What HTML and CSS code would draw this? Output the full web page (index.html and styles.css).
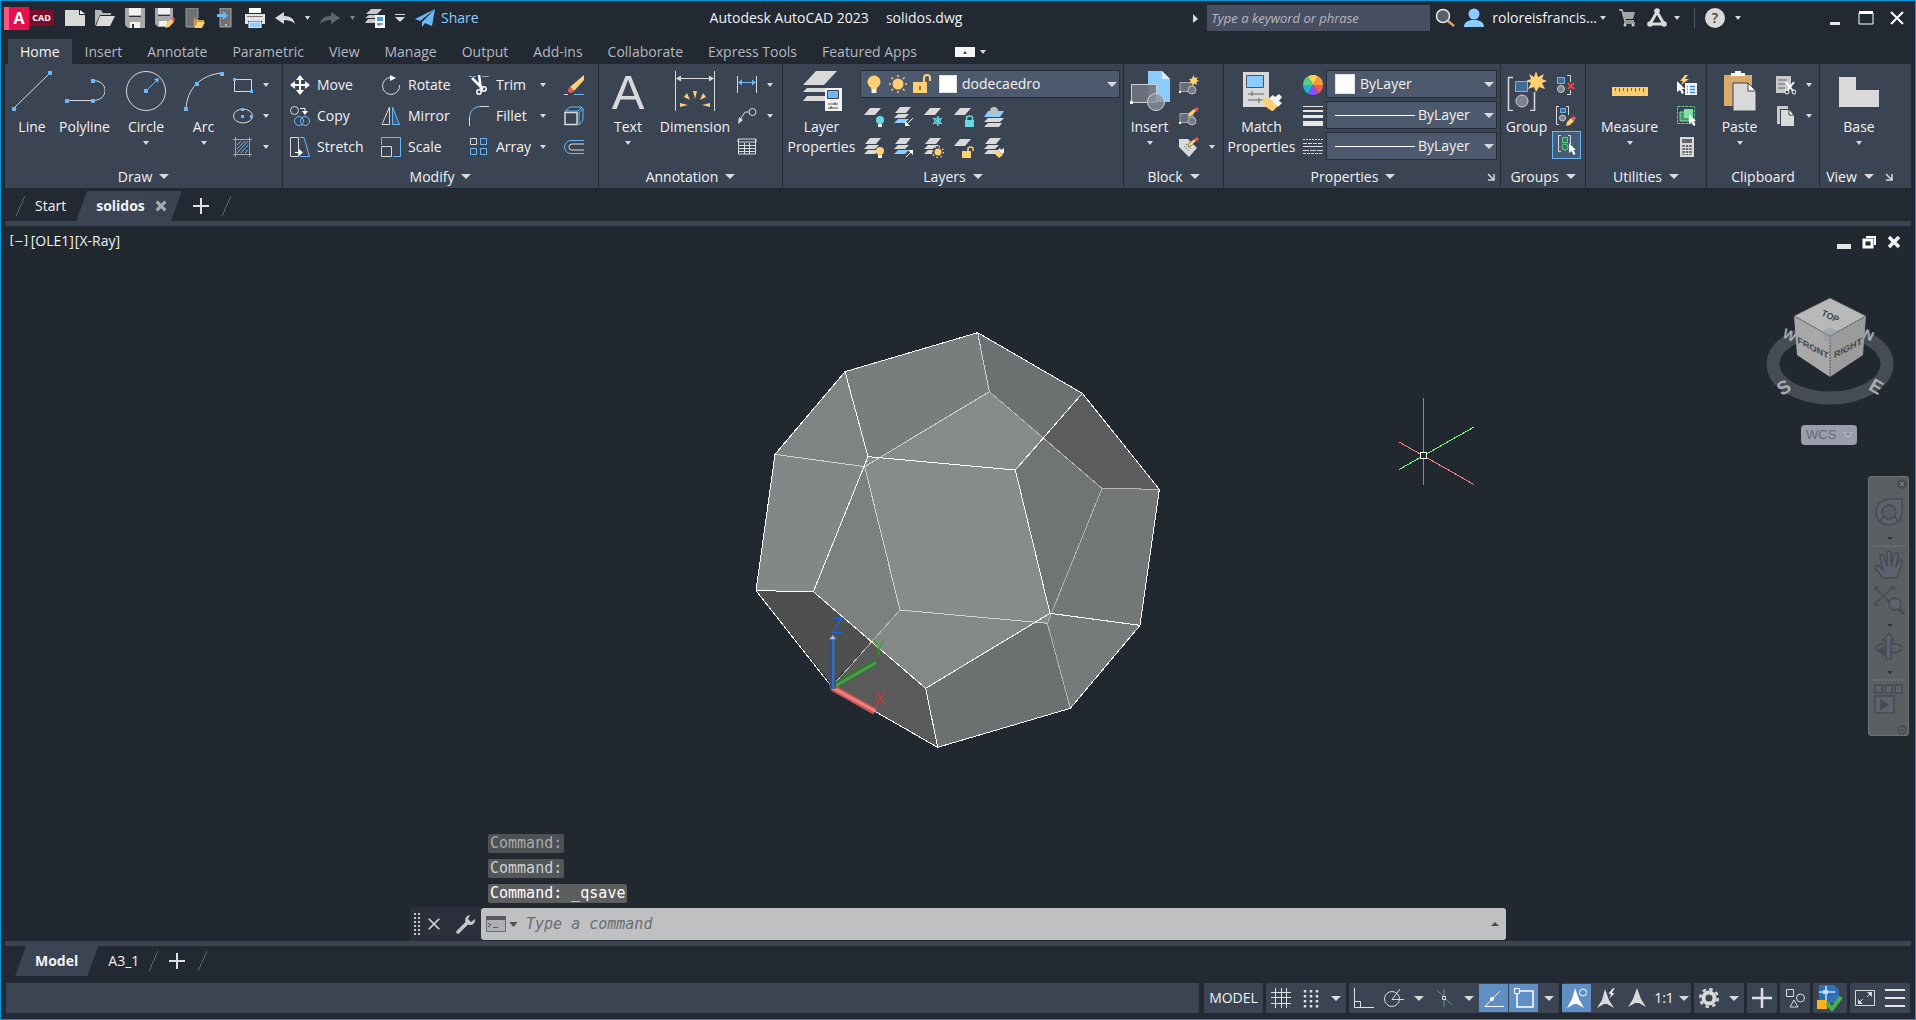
FILE: index.html
```
<!DOCTYPE html>
<html lang="en">
<head>
    <meta charset="UTF-8">
    <meta name="viewport" content="width=device-width, initial-scale=1.0">
    <title>Autodesk AutoCAD 2023 - solidos.dwg</title>
    <link rel="stylesheet" href="styles.css">
</head>
<body>
    <!-- icon sprite -->
    <svg class="sprite" aria-hidden="true">
        <symbol id="down" viewBox="0 0 8 5" preserveAspectRatio="none"><path d="M0 0h8L4 5z" fill="#d9d9d9"/></symbol>
        <symbol id="launch" viewBox="0 0 8 8"><path d="M1 1l5 5M7 1v6H1" fill="none" stroke="#d9d9d9" stroke-width="1.5"/></symbol>

        <!-- quick access -->
        <symbol id="new" viewBox="0 0 20 20"><path d="M0 2h14v5h6v11H0z" fill="#d9d9d9"/><path d="M15 2l5 4h-5z" fill="#fff"/></symbol>
        <symbol id="open" viewBox="0 0 20 20"><path d="M0 18V2h6l2 3h8v2H5z" fill="#b5b5b5"/><path d="M5 8h15l-5 10H1z" fill="#dcdcdc"/></symbol>
        <symbol id="save" viewBox="0 0 20 20"><path d="M0 0h20v20H3l-3-3z" fill="#a9a9a9"/><path d="M4 0h12v7H4zM5 14h10v6H5z" fill="#f2f2f2"/><path d="M4 8h12v1H4zM7 16h2v4H7z" fill="#333"/></symbol>
        <symbol id="saveas" viewBox="0 0 20 20"><path d="M0 0h18v12l-6 7H3l-3-3z" fill="#a9a9a9"/><path d="M3 0h12v6H3zM4 13h8v5H4z" fill="#f2f2f2"/><path d="M3 7h12v1H3z" fill="#333"/><path d="M10 20l1-4 5-5 3 3-5 5z" fill="#ffcf73"/><path d="M16 11l2-2 2 2-1 3z" fill="#ee5a5a"/></symbol>
        <symbol id="openweb" viewBox="0 0 20 20"><path d="M1 0h12v10H9v9H1z" fill="#717171" stroke="#999"/><path d="M9 19v-8h4l1 1h5v2h-7z" fill="#d79a45"/><path d="M12 14h8l-3 6H9z" fill="#ffcf73"/></symbol>
        <symbol id="saveweb" viewBox="0 0 20 20"><path d="M5 0h11v19H5z" fill="#717171" stroke="#aaa"/><path d="M2 6h6V3l5 4.500-5 4.500V9H2z" fill="#6cb8f6"/><circle cx="11" cy="17" r="1" fill="#ddd"/></symbol>
        <symbol id="print" viewBox="0 0 20 20"><path d="M4 0h12v5H4z" fill="#fff"/><path d="M0 6h20v10h-3v-3H3v3H0z" fill="#e3e3e3"/><path d="M2 8h16v1H2z" fill="#777"/><path d="M4 14h12v6H4z" fill="#8accff" stroke="#fff"/></symbol>
        <symbol id="undo" viewBox="0 0 20 20"><path d="M0 10l9-6v4c7 0 10 3 11 8-3-3-6-4-11-4v4z" fill="#d9d9d9"/></symbol>
        <symbol id="redo" viewBox="0 0 20 20"><path d="M20 10l-9-6v4C4 8 1 11 0 16c3-3 6-4 11-4v4z" fill="#5f6570"/></symbol>
        <symbol id="sheets" viewBox="0 0 20 20"><path d="M6 1h11l-5 5H1zM4 7h8v3H0zM3 11h8v4H0z" fill="#c9c9c9"/><path d="M10 7h10v13H10z" fill="#f2f2f2"/><path d="M12 9h6v4h-6z" fill="#3f9be6"/><path d="M12 16h6M14 15v3" stroke="#555"/></symbol>
        <symbol id="more" viewBox="0 0 10 10"><path d="M0 1.500h10" stroke="#d9d9d9"/><path d="M0 4h10L5 9z" fill="#d9d9d9"/></symbol>
        <symbol id="plane" viewBox="0 0 20 20"><path d="M20 1L0 11l5 2zM20 1L7 14v5l3-4 7 3z" fill="#6cb8f6"/></symbol>

        <!-- title bar, right -->
        <symbol id="search" viewBox="0 0 20 20"><path d="M13 13l6 5" stroke="#d9a066" stroke-width="2.500"/><circle cx="8" cy="8" r="6.500" fill="#5a6068" stroke="#e6e6e6" stroke-width="1.500"/></symbol>
        <symbol id="user" viewBox="0 0 20 20"><circle cx="10" cy="6" r="5.500" fill="#8accff"/><path d="M0 19c0-5 4-6 7-7h6c3 1 7 2 7 7z" fill="#8accff"/></symbol>
        <symbol id="cart" viewBox="0 0 20 20"><path d="M1 2h3l3 11h9M6 15h11" fill="none" stroke="#bdbdbd" stroke-width="1.500"/><path d="M5 4h12l-2 7H7z" fill="#a5a5a5"/><circle cx="7" cy="17" r="1.500" fill="#ccc"/><circle cx="15" cy="17" r="1.500" fill="#ccc"/></symbol>
        <symbol id="apps" viewBox="0 0 20 20"><path d="M10 4L3 16h14z" fill="none" stroke="#d9d9d9" stroke-width="3"/><circle cx="10" cy="3" r="2.800" fill="#d9d9d9"/><circle cx="3" cy="16" r="2.800" fill="#d9d9d9"/><circle cx="17" cy="16" r="2.800" fill="#d9d9d9"/></symbol>
        <symbol id="min" viewBox="0 0 16 16"><path d="M3 12h10v3H3z" fill="#e6e6e6"/></symbol>
        <symbol id="minbold" viewBox="0 0 16 16"><path d="M1 10h14v5H1z" fill="#e6e6e6"/></symbol>
        <symbol id="max" viewBox="0 0 16 16"><path d="M1 3h14v11H1z" fill="none" stroke="#fff"/><path d="M1 1h14v3H1z" fill="#fff"/></symbol>
        <symbol id="close" viewBox="0 0 16 16"><path d="M2 2l12 12M14 2L2 14" stroke="#fff" stroke-width="2"/></symbol>
        <symbol id="closebold" viewBox="0 0 16 16"><path d="M3 3l10 10M13 3L3 13" stroke="#f2f2f2" stroke-width="3.500"/></symbol>
        <symbol id="restore" viewBox="0 0 16 16"><path d="M5 3h9v8" fill="none" stroke="#fff" stroke-width="2"/><path d="M3 6h8v7H3z" fill="none" stroke="#fff" stroke-width="3"/></symbol>
        <symbol id="plus" viewBox="0 0 16 16"><path d="M8 0v16M0 8h16" stroke="#e0e0e0" stroke-width="2"/></symbol>

        <!-- draw -->
        <symbol id="line" viewBox="0 0 40 40"><path d="M1 38L38 2" stroke="#d9d9d9"/><path d="M0 36h4v4H0zM36 0h4v4h-4z" fill="#6cb8f6"/></symbol>
        <symbol id="polyline" viewBox="0 0 40 40"><path d="M2 29.500h26c7 0 12-4 12-10s-5-10-12-10" fill="none" stroke="#d9d9d9"/><path d="M0 28h4v4H0zM26 28h4v4h-4zM26 8h4v4h-4z" fill="#6cb8f6"/></symbol>
        <symbol id="circle" viewBox="0 0 40 40"><circle cx="20" cy="20" r="19.500" fill="none" stroke="#d9d9d9"/><path d="M20 20L30 10" stroke="#6cb8f6"/><path d="M18 18h4v4h-4zM33 7l-1 5-4-4z" fill="#6cb8f6"/></symbol>
        <symbol id="arc" viewBox="0 0 40 40"><path d="M2 38C3 18 16 4 38 2" fill="none" stroke="#d9d9d9"/><path d="M0 36h4v4H0zM11 11h4v4h-4zM36 1h4v4h-4z" fill="#6cb8f6"/></symbol>
        <symbol id="rect" viewBox="0 0 20 20"><path d="M1.500 4.500h17v12h-17z" fill="none" stroke="#d9d9d9"/><path d="M0 3h3v3H0zM17 15h3v3h-3z" fill="#6cb8f6"/></symbol>
        <symbol id="ellipse" viewBox="0 0 20 20"><ellipse cx="10" cy="10" rx="9.500" ry="7" fill="none" stroke="#d9d9d9"/><path d="M8 2h3v3H8zM8 9h3v3H8zM17 9h3v3h-3z" fill="#6cb8f6"/></symbol>
        <symbol id="hatch" viewBox="0 0 20 20"><path d="M0 2.500h19M0 17.500h19M2.500 0v20M16.500 0v20" stroke="#a5a5a5"/><path d="M4 8l4-4M4 12l8-8M4 16L15 4M8 16l7-8M12 16l3-3" stroke="#6cb8f6"/></symbol>

        <!-- modify -->
        <symbol id="move" viewBox="0 0 20 20"><path d="M10 3v14M3 10h14" stroke="#fff" stroke-width="2"/><path d="M10 0l4 5H6zM10 20l4-5H6zM0 10l5-4v8zM20 10l-5-4v8z" fill="#fff"/></symbol>
        <symbol id="copy" viewBox="0 0 20 20"><circle cx="4.500" cy="4.500" r="4" fill="none" stroke="#d9d9d9"/><path d="M10 2.500h5V6" fill="none" stroke="#fff"/><path d="M12 5h6l-3 4z" fill="#fff"/><circle cx="9" cy="15" r="4.500" fill="none" stroke="#6cb8f6"/><circle cx="15" cy="15" r="4.500" fill="none" stroke="#6cb8f6"/></symbol>
        <symbol id="stretch" viewBox="0 0 20 20"><path d="M.500.500h8v19h-8z" fill="none" stroke="#d9d9d9"/><path d="M10 .500h4l5.500 19H10" fill="none" stroke="#6cb8f6"/><path d="M5 15.500h6" stroke="#fff"/><path d="M9 12l4 3.500L9 19z" fill="#fff"/></symbol>
        <symbol id="rotate" viewBox="0 0 20 20"><path d="M9 2.500a8.500 8.500 0 1 0 9.500 7.500" fill="none" stroke="#d9d9d9"/><path d="M9 0l6 3-6 3z" fill="#fff"/></symbol>
        <symbol id="mirror" viewBox="0 0 20 20"><path d="M8.500 1v17.500H1z" fill="none" stroke="#d9d9d9"/><path d="M11.500 1v17.500h7z" fill="#3c5f80" stroke="#6cb8f6"/></symbol>
        <symbol id="scale" viewBox="0 0 20 20"><path d="M.500 8V.500h19v19H12" fill="none" stroke="#6cb8f6"/><path d="M.500 9.500h10v10H.500z" fill="none" stroke="#d9d9d9"/></symbol>
        <symbol id="trim" viewBox="0 0 20 20"><path d="M0 1.500h8" stroke="#6cb8f6" stroke-dasharray="3 1"/><path d="M13 1.500h7" stroke="#999"/><path d="M3 3l11 11M10 0l2 14" stroke="#fff" stroke-width="2.500"/><circle cx="15" cy="14" r="2.200" fill="none" stroke="#fff" stroke-width="1.500"/><circle cx="10" cy="17" r="2.200" fill="none" stroke="#fff" stroke-width="1.500"/></symbol>
        <symbol id="fillet" viewBox="0 0 20 20"><path d="M.500 11C1 5 5 1 11 .500" fill="none" stroke="#6cb8f6"/><path d="M.500 11v9M11 .500h9" stroke="#d9d9d9"/></symbol>
        <symbol id="array" viewBox="0 0 20 20"><path d="M1.500 1.500h6v6h-6z" fill="none" stroke="#d9d9d9"/><path d="M11.500 1.500h6v6h-6zM1.500 11.500h6v6h-6zM11.500 11.500h6v6h-6z" fill="none" stroke="#6cb8f6"/></symbol>
        <symbol id="erase" viewBox="0 0 20 20"><path d="M20 0v5L10 16l-4-4z" fill="#ffd27a"/><path d="M6 12l4 4c-2 3-6 2-6 0s1-3 2-4z" fill="#ee5a5a"/><path d="M0 19.500h4" stroke="#d9d9d9"/><path d="M10 19.500h10" stroke="#6cb8f6"/></symbol>
        <symbol id="explode" viewBox="0 0 20 20"><path d="M1 6.500h12v12H1z" fill="none" stroke="#d9d9d9" stroke-width="1.500"/><path d="M1 5l5-4h12l-4 4zM15 7l4-5v12l-4 5z" fill="none" stroke="#6cb8f6"/></symbol>
        <symbol id="offset" viewBox="0 0 20 20"><path d="M20 3.500H7a6.500 6.500 0 0 0 0 13h13" fill="none" stroke="#6cb8f6"/><path d="M20 7H8a3 3 0 0 0 0 6h12" fill="none" stroke="#d9d9d9"/></symbol>

        <!-- annotation -->
        <symbol id="dimension" viewBox="0 0 40 40"><path d="M.500 0v40M39.500 0v40M3 7.500h34" stroke="#d9d9d9"/><path d="M1 7.500l5-3v6zM39 7.500l-5-3v6z" fill="#d9d9d9"/><path d="M20 28l-2-8h4zM15 29l-6-3 3-4zM25 29l6-3-3-4zM13 34l-8-2v4zM27 34l8-2v4z" fill="#ffcf73"/></symbol>
        <symbol id="dimlinear" viewBox="0 0 20 20"><path d="M.500 1v17M19.500 1v17" stroke="#d9d9d9"/><path d="M2 7.500h16" stroke="#6cb8f6"/><path d="M1 7.500l4-3v6zM19 7.500l-4-3v6z" fill="#6cb8f6"/></symbol>
        <symbol id="leader" viewBox="0 0 20 20"><circle cx="15.500" cy="6" r="3.500" fill="none" stroke="#d9d9d9"/><path d="M12 6H8l-5 8" fill="none" stroke="#d9d9d9"/><path d="M1 18l1-7 4 3z" fill="#d9d9d9"/></symbol>
        <symbol id="table" viewBox="0 0 20 20"><path d="M1 2h18v3H1zM1.500 2v15h17V2M1 8.500h18M1 11.500h18M1 14.500h18M7.500 6v11M12.500 6v11" fill="none" stroke="#d9d9d9"/></symbol>

        <!-- layers -->
        <symbol id="layerprops" viewBox="0 0 40 40"><path d="M14 0h21L22 14H1zM5 17h18v4l-1 0H1zM5 25h18v5H1z" fill="#d9d9d9"/><path d="M23 17h17v23H23z" fill="#f2f2f2"/><path d="M25.500 19.500h11v8h-11z" fill="#6cb8f6" stroke="#444"/><path d="M26 33h10M26 37h10M33 31v3M29 35v3" stroke="#555"/></symbol>
        <symbol id="bulb" viewBox="0 0 20 20"><circle cx="10" cy="8" r="6.500" fill="#ffcf73"/><path d="M7 12h6v3H7z" fill="#ffcf73"/><path d="M7.500 15h5v4h-5z" fill="#f2f2f2"/></symbol>
        <symbol id="sun" viewBox="0 0 20 20"><circle cx="10" cy="10" r="5.500" fill="#ffcf73"/><path d="M10 1v2M1 10h2M3.500 3.500l1.500 1.500M16.500 3.500L15 5M10 19v-2M19 10h-2M16.500 16.500L15 15M3.500 16.500L5 15" stroke="#ffcf73" stroke-width="1.500"/></symbol>
        <symbol id="unlock" viewBox="0 0 20 20"><path d="M1 8h14v11H1z" fill="#ffcf73"/><path d="M12 8V4q0-3 3-3t3 3v3" fill="none" stroke="#ffcf73" stroke-width="2"/><path d="M8 12v4" stroke="#6b5630" stroke-width="1.500"/></symbol>
        <symbol id="sheet1" viewBox="0 0 20 20"><path d="M6 1h11L11 8H0z" fill="#d9d9d9"/></symbol>
        <symbol id="sheet3" viewBox="0 0 20 20"><path d="M6 0h11l-5 6H1zM4 7h11l-4 4H0zM4 12h11l-4 4H0z" fill="#d9d9d9"/></symbol>
        <symbol id="layoff" viewBox="0 0 20 20"><path d="M6 1h11L11 8H0z" fill="#d9d9d9"/><circle cx="16" cy="13" r="4" fill="#67d9e5"/><path d="M14 17h4v3h-4z" fill="#f2f2f2"/></symbol>
        <symbol id="layiso" viewBox="0 0 20 20"><path d="M6 0h11l-5 6H1zM4 7h11l-4 4H0z" fill="#d9d9d9"/><path d="M4 12h11l-4 4H0z" fill="#8accff"/><path d="M19 11l-6 6" stroke="#fff"/><path d="M11 19v-5l5 5z" fill="#fff"/></symbol>
        <symbol id="layfrz" viewBox="0 0 20 20"><path d="M6 1h11L11 8H0z" fill="#d9d9d9"/><path d="M14 9v10M9 11l9 6M9 17l9-6" stroke="#67d9e5" stroke-width="1.500"/><circle cx="13.500" cy="14" r="3" fill="none" stroke="#67d9e5"/></symbol>
        <symbol id="laylck" viewBox="0 0 20 20"><path d="M6 1h11L11 8H0z" fill="#d9d9d9"/><path d="M11 13h9v7h-9z" fill="#67d9e5"/><path d="M12.500 13v-2q0-2 3-2t3 2v2" fill="none" stroke="#67d9e5" stroke-width="1.500"/></symbol>
        <symbol id="laymcur" viewBox="0 0 20 20"><path d="M4 4h16l-4 6H0z" fill="#8accff"/><path d="M4 11h16l-4 4H0zM4 16h14l-3 4H0z" fill="#d9d9d9"/><circle cx="10" cy="4" r="4" fill="#bfbfbf"/></symbol>
        <symbol id="layon" viewBox="0 0 20 20"><path d="M6 0h11l-5 6H1zM4 7h11l-4 4H0zM4 12h11l-4 4H0z" fill="#d9d9d9"/><circle cx="16" cy="13" r="4" fill="#ffcf73"/><path d="M14 17h4v3h-4z" fill="#f2f2f2"/></symbol>
        <symbol id="layuniso" viewBox="0 0 20 20"><path d="M6 0h11l-5 6H1zM4 7h11l-4 4H0z" fill="#d9d9d9"/><path d="M4 12h11l-4 4H0z" fill="#8accff"/><path d="M12 19l6-6" stroke="#fff"/><path d="M14 12h5v5z" fill="#fff"/></symbol>
        <symbol id="laythw" viewBox="0 0 20 20"><path d="M6 0h11l-5 6H1zM4 7h11l-4 4H0zM4 12h11l-4 4H0z" fill="#d9d9d9"/><circle cx="14" cy="14" r="6" fill="#3b4453"/><circle cx="14" cy="14" r="3.500" fill="#ffcf73"/><circle cx="14" cy="14" r="5.500" fill="none" stroke="#ffcf73" stroke-width="1.500" stroke-dasharray="1.500 2.800"/></symbol>
        <symbol id="layulk" viewBox="0 0 20 20"><path d="M6 1h11L11 8H0z" fill="#d9d9d9"/><path d="M8 13h9v7H8z" fill="#ffcf73"/><path d="M14 13v-2q0-2 2.500-2t2.500 2v2" fill="none" stroke="#ffcf73" stroke-width="1.500"/></symbol>
        <symbol id="laymch" viewBox="0 0 20 20"><path d="M6 0h11l-5 6H1zM4 7h11l-4 4H0zM4 12h11l-4 4H0z" fill="#d9d9d9"/><path d="M10 15l4-3 5 5-4 3z" fill="#ffcf73"/><path d="M14 12l2-2 1 2 3-2v5l-2 1z" fill="#f2f2f2"/></symbol>

        <!-- block -->
        <symbol id="insert" viewBox="0 0 40 40"><path d="M18 0h14l8 8v23H18z" fill="#8accff"/><path d="M32 0l8 8h-8z" fill="#d6ecff"/><path d="M1.500 13.500h25v18h-25z" fill="#6f7580" fill-opacity=".9" stroke="#d0d0d0"/><circle cx="26" cy="31" r="8.500" fill="#8d929b" fill-opacity=".75" stroke="#d0d0d0"/><path d="M0 30h3v3H0z" fill="#fff"/></symbol>
        <symbol id="blocknew" viewBox="0 0 20 20"><path d="M1 7.500h13v9H1z" fill="#686e79" stroke="#aaa"/><circle cx="13" cy="15" r="4" fill="#777d88" stroke="#bbb"/><path d="M0 16h2v2H0z" fill="#fff"/><path d="M14.500 0l1.300 3 3-1-1.200 2.500L20 6l-2.700 1 1 3-2.800-1.500-1.500 2-1-2.500-3 .5 1.800-2.300L10 4l3-.5z" fill="#ffcf73"/></symbol>
        <symbol id="blockedit" viewBox="0 0 20 20"><path d="M1 7.500h13v9H1z" fill="#686e79" stroke="#aaa"/><circle cx="13" cy="15" r="4" fill="#777d88" stroke="#bbb"/><path d="M0 16h2v2H0z" fill="#fff"/><path d="M9 11l1-4 5-4 2 2-5 5z" fill="#ffcf73"/><path d="M15 3l3-2 2 2-3 3z" fill="#ee5a5a"/></symbol>
        <symbol id="attr" viewBox="0 0 20 20"><path d="M0 2h9l9 9-8 9-10-10z" fill="#d9d9d9"/><path d="M5 9l5 5M7 7l5 5" stroke="#777" stroke-dasharray="2 1"/><path d="M9 10l1-4 5-4 2 2-5 5z" fill="#ffcf73" stroke="#3b4453" stroke-width=".5"/><path d="M15 2l3-2 2 2-3 3z" fill="#ee5a5a"/></symbol>

        <!-- properties -->
        <symbol id="match" viewBox="0 0 40 40"><path d="M1 1h26v35H1z" fill="#d9d9d9"/><path d="M4.500 4.500h17v12h-17z" fill="#8accff" stroke="#555"/><path d="M6 23h16M6 29h16M10 20v5M17 27v5" stroke="#666"/><path d="M20 29l6-3 10 9-5 5c-5-1-9-6-11-11z" fill="#ffcf73"/><path d="M27 27l4-3 2 2 4-3 3 3-3 4 3 2-4 4z" fill="#f2f2f2"/></symbol>
        <symbol id="wheel" viewBox="0 0 20 20"><path d="M10 10L5 1.300a10 10 0 0 1 10 0z" fill="#ffd24d"/><path d="M10 10l5-8.700A10 10 0 0 1 20 10z" fill="#ff9a3c"/><path d="M10 10h10a10 10 0 0 1-5 8.700z" fill="#ee5a5a"/><path d="M10 10l5 8.700a10 10 0 0 1-10 0z" fill="#8a4dff"/><path d="M10 10l-5 8.700A10 10 0 0 1 0 10z" fill="#19b3d6"/><path d="M10 10H0a10 10 0 0 1 5-8.700z" fill="#54cf86"/></symbol>
        <symbol id="lweight" viewBox="0 0 20 20"><path d="M0 0h20v1H0zM0 4h20v2H0zM0 9h20v3H0zM0 15h20v5H0z" fill="#e6e6e6"/></symbol>
        <symbol id="ltype" viewBox="0 0 20 20"><path d="M0 2.500h20" stroke="#d9d9d9" stroke-dasharray="2 1"/><path d="M0 6.500h20" stroke="#d9d9d9" stroke-dasharray="4 1"/><path d="M0 9.500h20" stroke="#d9d9d9"/><path d="M0 13.500h20" stroke="#d9d9d9" stroke-dasharray="6 1"/><path d="M0 16.500h20" stroke="#d9d9d9" stroke-dasharray="3 1"/></symbol>

        <!-- groups -->
        <symbol id="group" viewBox="0 0 40 40"><path d="M6 6.500H1.500v33H6M23 39.500h4.500V21" fill="none" stroke="#d9d9d9" stroke-width="1.500"/><path d="M8.500 10.500h12v10h-12z" fill="#3f6c96" stroke="#6cb8f6"/><circle cx="15" cy="30" r="6" fill="#7d828c" stroke="#d0d0d0"/><path d="M29 0l2 6 6-3-2 5 5 2-5 2 3 6-6-2-3 5-2-5-6 2 3-6-5-2 5-2-2-5 5 3z" fill="#ffcf73"/></symbol>
        <symbol id="ungroup" viewBox="0 0 20 20"><path d="M1.500 2.500h7v6h-7z" fill="#3f6c96" stroke="#6cb8f6"/><circle cx="5" cy="14" r="3.500" fill="#7d828c" stroke="#d0d0d0"/><path d="M11 .500h3.500V7M11 19.500h3.500V15" fill="none" stroke="#d9d9d9"/><path d="M12 8l6 6M18 8l-6 6" stroke="#ee4444" stroke-width="2"/></symbol>
        <symbol id="groupedit" viewBox="0 0 20 20"><path d="M3 .500H.500v18H3M10 .500h2.500V9" fill="none" stroke="#d9d9d9"/><path d="M4.500 2.500h5v4h-5z" fill="#3f6c96" stroke="#6cb8f6"/><circle cx="6.500" cy="12" r="3" fill="#7d828c" stroke="#d0d0d0"/><path d="M10 20l1-4 4-4 3 3-4 4z" fill="#ffcf73"/><path d="M15 12l3-2 2 2-2 3z" fill="#ee5a5a"/></symbol>
        <symbol id="groupsel" viewBox="0 0 20 20"><path d="M4 .500H1.500v16H4M11 .500h2.500V9" fill="none" stroke="#d9d9d9"/><path d="M5.500 2.500h5v5h-5z" fill="#2f7a52" stroke="#5fd18c"/><circle cx="8" cy="12" r="3" fill="#2f7a52" stroke="#5fd18c"/><path d="M12 8v10l2.500-2 2 4 2-1-2-4H19z" fill="#fff"/></symbol>

        <!-- utilities -->
        <symbol id="ruler" viewBox="0 0 40 40"><path d="M2 16h36v9H2z" fill="#ffcf73"/><path d="M5.500 17v3M9.500 17v4M13.500 17v3M17.500 17v4M21.500 17v3M25.500 17v4M29.500 17v3M33.500 17v4" stroke="#7d6433"/></symbol>
        <symbol id="qselect" viewBox="0 0 20 20"><path d="M8 0L3 6h3l-2 4 8-6H8l3-4z" fill="#ffcf73"/><path d="M0 6v11l3-2 2 4 2-1-2-4h3z" fill="#fff"/><path d="M8 8h12v12H8z" fill="#f5f5f5"/><path d="M10 11.500h1M13 11.500h5M10 14.500h1M13 14.500h5M10 17.500h1M13 17.500h5" stroke="#2d8ce0" stroke-width="1.500"/></symbol>
        <symbol id="selall" viewBox="0 0 20 20"><path d="M.500.500h17v17H.500z" fill="none" stroke="#5fd18c" stroke-dasharray="3 1"/><path d="M3 6h9v9H3z" fill="#3f9c69" stroke="#82e0a8"/><path d="M7 3h9v9H7z" fill="#82e0a8"/><path d="M12 8v10l2.500-2 2 4 2-1-2-4H19z" fill="#fff"/></symbol>
        <symbol id="calc" viewBox="0 0 20 20"><path d="M3 0h14v20H3z" fill="#d9d9d9"/><path d="M5 2h10v4H5z" fill="#666"/><path d="M6.500 8v10M10 8v10M13.500 8v10" stroke="#666" stroke-width="2.500" stroke-dasharray="2 1"/></symbol>

        <!-- clipboard -->
        <symbol id="paste" viewBox="0 0 40 40"><path d="M4 4h28v31H4z" fill="#d8ab6c"/><path d="M11 5V2h4V0h6v2h4v3z" fill="#fff"/><path d="M13 12h15l8 8v20H13z" fill="#d9d9d9" stroke="#3b4453"/><path d="M28 12l8 8h-8z" fill="#fff" stroke="#3b4453"/></symbol>
        <symbol id="cut" viewBox="0 0 20 20"><path d="M0 1h15v9l-5 8H0z" fill="#c9c9c9"/><path d="M2 5h9M2 9h7M2 13h7" stroke="#666"/><path d="M10 7l7 9M18 7l-7 9" stroke="#fff" stroke-width="2"/><circle cx="11" cy="17" r="2" fill="#3b4453" stroke="#fff"/><circle cx="18" cy="17" r="2" fill="#3b4453" stroke="#fff"/></symbol>
        <symbol id="copyclip" viewBox="0 0 20 20"><path d="M1 0h11v3H4v15H1z" fill="#c9c9c9"/><path d="M5 4h8l5 5v11H5z" fill="#d9d9d9"/><path d="M13 3l5 6h-5z" fill="#fff" stroke="#3b4453"/></symbol>
        <symbol id="base" viewBox="0 0 40 40"><path d="M0 6h17v13h23v17H0z" fill="#d9d9d9"/></symbol>

        <!-- status bar -->
        <symbol id="s-grid" viewBox="0 0 20 20"><path d="M0 4.500h20M0 9.500h20M0 15.500h20M4.500 0v20M10.500 0v20M15.500 0v20" stroke="#e0e0e0"/></symbol>
        <symbol id="s-snap" viewBox="0 0 20 20"><path d="M4 2v18M10 2v18M16 2v18" stroke="#e0e0e0" stroke-width="2.500" stroke-dasharray="2.500 2.500"/></symbol>
        <symbol id="s-ortho" viewBox="0 0 20 20"><path d="M.500 0v19.500H20M.500 13.500h6v6" fill="none" stroke="#e0e0e0"/></symbol>
        <symbol id="s-polar" viewBox="0 0 20 20"><circle cx="8" cy="11" r="7.500" fill="none" stroke="#d9d9d9"/><path d="M20 11.500H8L16 1" fill="none" stroke="#d9d9d9"/></symbol>
        <symbol id="s-iso" viewBox="0 0 20 20"><path d="M10 1v18" stroke="#4fae6e"/><path d="M3 2l15 15" stroke="#d9606a"/><path d="M8.500 8.500h3v3h-3z" fill="#3b4453" stroke="#ddd"/></symbol>
        <symbol id="s-track" viewBox="0 0 20 20"><path d="M16 3L1 18.500h19" fill="none" stroke="#fff"/><circle cx="8" cy="11" r="2" fill="#fff"/></symbol>
        <symbol id="s-osnap" viewBox="0 0 20 20"><path d="M3 3h16v16H3z" fill="none" stroke="#fff" stroke-width="1.500"/><path d="M.500.500h5v5h-5z" fill="#5f8fc4" stroke="#fff"/></symbol>
        <symbol id="s-anno" viewBox="0 0 20 20"><path d="M10 0l4 11 5 8-7-4H8l-7 4 5-8z" fill="#d9d9d9"/></symbol>
        <symbol id="s-annovis" viewBox="0 0 20 20"><path d="M8 0l4 11 5 9-7-4H7l-7 4 5-9z" fill="#fff"/><circle cx="16" cy="4.500" r="3.500" fill="none" stroke="#fff"/></symbol>
        <symbol id="s-annoauto" viewBox="0 0 20 20"><path d="M8 1l4 11 5 8-7-4H7l-7 4 5-8z" fill="#d9d9d9"/><path d="M16 0l-5 6h3l-2 5 6-6h-3l3-5z" fill="#fff" stroke="#3b4453" stroke-width=".500"/></symbol>
        <symbol id="s-gear" viewBox="0 0 20 20"><circle cx="10" cy="10" r="5.500" fill="none" stroke="#d9d9d9" stroke-width="4"/><circle cx="10" cy="10" r="8.800" fill="none" stroke="#d9d9d9" stroke-width="2.500" stroke-dasharray="3.500 3.410"/></symbol>
        <symbol id="s-isolate" viewBox="0 0 20 20"><path d="M1.500 1.500h7v7h-7zM9 12l4 7H5z" fill="none" stroke="#d9d9d9"/><circle cx="15.500" cy="10" r="4" fill="none" stroke="#d9d9d9"/></symbol>
        <symbol id="s-tray" viewBox="0 0 26 26"><path d="M2 0h15l5 5v13H2z" fill="#2f6fb5"/><path d="M9 1v14M2 7h16" stroke="#bfe0ff" stroke-width="1.500"/><path d="M6 5h5v4H6z" fill="#bfe0ff"/><path d="M0 15h10v9H0z" fill="#f6b21b"/><path d="M10 18l5 6 9-12" fill="none" stroke="#46b04a" stroke-width="4"/></symbol>
        <symbol id="s-clean" viewBox="0 0 20 20"><path d="M.500 2.500h19v15H.500z" fill="none" stroke="#d9d9d9"/><path d="M12 9l4-4M8 11l-4 4" stroke="#d9d9d9"/><path d="M12 4h5v5zM3 11v5h5z" fill="#d9d9d9"/></symbol>
        <symbol id="s-menu" viewBox="0 0 20 20"><path d="M0 2h20M0 10h20M0 18h20" stroke="#e6e6e6" stroke-width="2"/></symbol>
    </svg>

    <div class="window">
        <header class="titlebar">
            <div class="quick">
                <button class="logo" aria-label="Application menu"><span class="logo-a">A</span><span class="logo-cad">CAD</span></button>
                <button aria-label="New"><svg class="icon"><use href="#new"/></svg></button>
                <button aria-label="Open"><svg class="icon"><use href="#open"/></svg></button>
                <button aria-label="Save"><svg class="icon"><use href="#save"/></svg></button>
                <button aria-label="Save as"><svg class="icon"><use href="#saveas"/></svg></button>
                <button aria-label="Open from web"><svg class="icon"><use href="#openweb"/></svg></button>
                <button aria-label="Save to web"><svg class="icon"><use href="#saveweb"/></svg></button>
                <button aria-label="Plot"><svg class="icon"><use href="#print"/></svg></button>
                <button aria-label="Undo"><svg class="icon"><use href="#undo"/></svg></button>
                <button aria-label="Undo list"><svg class="arrow"><use href="#down"/></svg></button>
                <button aria-label="Redo"><svg class="icon"><use href="#redo"/></svg></button>
                <button aria-label="Redo list" class="dim"><svg class="arrow"><use href="#down"/></svg></button>
                <button aria-label="Batch plot"><svg class="icon"><use href="#sheets"/></svg></button>
                <button aria-label="Customize"><svg class="icon-more"><use href="#more"/></svg></button>
                <button class="share"><svg class="icon"><use href="#plane"/></svg>Share</button>
            </div>
            <div class="caption"><span>Autodesk AutoCAD 2023</span><span>solidos.dwg</span></div>
            <div class="infocenter">
                <button class="expand" aria-label="Collapse search"><svg viewBox="0 0 5 9"><path d="M0 0v9l5-4z" fill="#d9d9d9"/></svg></button>
                <input class="search" type="text" placeholder="Type a keyword or phrase" aria-label="Search">
                <button aria-label="Search"><svg class="icon"><use href="#search"/></svg></button>
                <button class="account"><svg class="icon"><use href="#user"/></svg>roloreisfrancis...<svg class="arrow"><use href="#down"/></svg></button>
                <button aria-label="App store" class="store"><svg class="icon"><use href="#cart"/></svg></button>
                <button aria-label="Autodesk" class="apps"><svg class="icon"><use href="#apps"/></svg><svg class="arrow"><use href="#down"/></svg></button>
                <button aria-label="Help" class="help"><span class="help-mark">?</span><svg class="arrow"><use href="#down"/></svg></button>
            </div>
            <div class="winctl">
                <button aria-label="Minimize"><svg class="icon16"><use href="#min"/></svg></button>
                <button aria-label="Maximize"><svg class="icon16"><use href="#max"/></svg></button>
                <button aria-label="Close"><svg class="icon16"><use href="#close"/></svg></button>
            </div>
        </header>

        <nav class="tabs">
            <button class="tab active">Home</button>
            <button class="tab">Insert</button>
            <button class="tab">Annotate</button>
            <button class="tab">Parametric</button>
            <button class="tab">View</button>
            <button class="tab">Manage</button>
            <button class="tab">Output</button>
            <button class="tab">Add-ins</button>
            <button class="tab">Collaborate</button>
            <button class="tab">Express Tools</button>
            <button class="tab">Featured Apps</button>
            <button class="collapse" aria-label="Minimize ribbon"><span class="collapse-box">&#9650;</span><svg class="arrow"><use href="#down"/></svg></button>
        </nav>

        <div class="ribbon">
            <section class="panel draw">
                <div class="panel-body">
                    <button class="big"><svg class="icon40"><use href="#line"/></svg><span>Line</span></button>
                    <button class="big"><svg class="icon40"><use href="#polyline"/></svg><span>Polyline</span></button>
                    <button class="big"><svg class="icon40"><use href="#circle"/></svg><span>Circle</span><svg class="arrow"><use href="#down"/></svg></button>
                    <button class="big"><svg class="icon40"><use href="#arc"/></svg><span>Arc</span><svg class="arrow"><use href="#down"/></svg></button>
                    <div class="stack">
                        <button class="tool" aria-label="Rectangle"><svg class="icon"><use href="#rect"/></svg><svg class="arrow"><use href="#down"/></svg></button>
                        <button class="tool" aria-label="Ellipse"><svg class="icon"><use href="#ellipse"/></svg><svg class="arrow"><use href="#down"/></svg></button>
                        <button class="tool" aria-label="Hatch"><svg class="icon"><use href="#hatch"/></svg><svg class="arrow"><use href="#down"/></svg></button>
                    </div>
                </div>
                <div class="panel-title"><button class="panel-name">Draw<svg class="arrow-lg"><use href="#down"/></svg></button></div>
            </section>

            <section class="panel modify">
                <div class="panel-body">
                    <button class="tool"><svg class="icon"><use href="#move"/></svg>Move</button>
                    <button class="tool"><svg class="icon"><use href="#rotate"/></svg>Rotate</button>
                    <button class="tool split"><svg class="icon"><use href="#trim"/></svg>Trim<svg class="arrow"><use href="#down"/></svg></button>
                    <button class="tool" aria-label="Erase"><svg class="icon"><use href="#erase"/></svg></button>
                    <button class="tool"><svg class="icon"><use href="#copy"/></svg>Copy</button>
                    <button class="tool"><svg class="icon"><use href="#mirror"/></svg>Mirror</button>
                    <button class="tool split"><svg class="icon"><use href="#fillet"/></svg>Fillet<svg class="arrow"><use href="#down"/></svg></button>
                    <button class="tool" aria-label="Explode"><svg class="icon"><use href="#explode"/></svg></button>
                    <button class="tool"><svg class="icon"><use href="#stretch"/></svg>Stretch</button>
                    <button class="tool"><svg class="icon"><use href="#scale"/></svg>Scale</button>
                    <button class="tool split"><svg class="icon"><use href="#array"/></svg>Array<svg class="arrow"><use href="#down"/></svg></button>
                    <button class="tool" aria-label="Offset"><svg class="icon"><use href="#offset"/></svg></button>
                </div>
                <div class="panel-title"><button class="panel-name">Modify<svg class="arrow-lg"><use href="#down"/></svg></button></div>
            </section>

            <section class="panel annotation">
                <div class="panel-body">
                    <button class="big"><span class="glyph-a">A</span><span>Text</span><svg class="arrow"><use href="#down"/></svg></button>
                    <button class="big"><svg class="icon40"><use href="#dimension"/></svg><span>Dimension</span></button>
                    <div class="stack">
                        <button class="tool" aria-label="Linear"><svg class="icon"><use href="#dimlinear"/></svg><svg class="arrow"><use href="#down"/></svg></button>
                        <button class="tool" aria-label="Leader"><svg class="icon"><use href="#leader"/></svg><svg class="arrow"><use href="#down"/></svg></button>
                        <button class="tool" aria-label="Table"><svg class="icon"><use href="#table"/></svg></button>
                    </div>
                </div>
                <div class="panel-title"><button class="panel-name">Annotation<svg class="arrow-lg"><use href="#down"/></svg></button></div>
            </section>

            <section class="panel layers">
                <div class="panel-body">
                    <button class="big"><svg class="icon40"><use href="#layerprops"/></svg><span>Layer<br>Properties</span></button>
                    <div class="layer-tools">
                        <div class="combo">
                            <svg class="icon"><use href="#bulb"/></svg>
                            <svg class="icon"><use href="#sun"/></svg>
                            <svg class="icon"><use href="#unlock"/></svg>
                            <span class="swatch"></span>
                            <select aria-label="Layer"><option>dodecaedro</option></select>
                            <svg class="arrow-lg"><use href="#down"/></svg>
                        </div>
                        <div class="icon-row">
                            <button class="tool" aria-label="Off"><svg class="icon"><use href="#layoff"/></svg></button>
                            <button class="tool" aria-label="Isolate"><svg class="icon"><use href="#layiso"/></svg></button>
                            <button class="tool" aria-label="Freeze"><svg class="icon"><use href="#layfrz"/></svg></button>
                            <button class="tool" aria-label="Lock"><svg class="icon"><use href="#laylck"/></svg></button>
                            <button class="tool" aria-label="Make current"><svg class="icon"><use href="#laymcur"/></svg></button>
                        </div>
                        <div class="icon-row">
                            <button class="tool" aria-label="Turn all on"><svg class="icon"><use href="#layon"/></svg></button>
                            <button class="tool" aria-label="Unisolate"><svg class="icon"><use href="#layuniso"/></svg></button>
                            <button class="tool" aria-label="Thaw all"><svg class="icon"><use href="#laythw"/></svg></button>
                            <button class="tool" aria-label="Unlock"><svg class="icon"><use href="#layulk"/></svg></button>
                            <button class="tool" aria-label="Match layer"><svg class="icon"><use href="#laymch"/></svg></button>
                        </div>
                    </div>
                </div>
                <div class="panel-title"><button class="panel-name">Layers<svg class="arrow-lg"><use href="#down"/></svg></button></div>
            </section>

            <section class="panel block">
                <div class="panel-body">
                    <button class="big"><svg class="icon40"><use href="#insert"/></svg><span>Insert</span><svg class="arrow"><use href="#down"/></svg></button>
                    <div class="stack">
                        <button class="tool" aria-label="Create"><svg class="icon"><use href="#blocknew"/></svg></button>
                        <button class="tool" aria-label="Edit"><svg class="icon"><use href="#blockedit"/></svg></button>
                        <button class="tool" aria-label="Edit attributes"><svg class="icon"><use href="#attr"/></svg><svg class="arrow"><use href="#down"/></svg></button>
                    </div>
                </div>
                <div class="panel-title"><button class="panel-name">Block<svg class="arrow-lg"><use href="#down"/></svg></button></div>
            </section>

            <section class="panel properties">
                <div class="panel-body">
                    <button class="big"><svg class="icon40"><use href="#match"/></svg><span>Match<br>Properties</span></button>
                    <div class="stack">
                        <button class="tool" aria-label="Object color"><svg class="icon"><use href="#wheel"/></svg></button>
                        <button class="tool" aria-label="Lineweight"><svg class="icon"><use href="#lweight"/></svg></button>
                        <button class="tool" aria-label="Linetype"><svg class="icon"><use href="#ltype"/></svg></button>
                    </div>
                    <div class="combos">
                        <div class="combo"><span class="swatch swatch-lg"></span><select aria-label="Color"><option>ByLayer</option></select><svg class="arrow-lg"><use href="#down"/></svg></div>
                        <div class="combo"><span class="sample"></span><select aria-label="Lineweight"><option>ByLayer</option></select><svg class="arrow-lg"><use href="#down"/></svg></div>
                        <div class="combo"><span class="sample"></span><select aria-label="Linetype"><option>ByLayer</option></select><svg class="arrow-lg"><use href="#down"/></svg></div>
                    </div>
                </div>
                <div class="panel-title"><button class="panel-name">Properties<svg class="arrow-lg"><use href="#down"/></svg></button><button class="launcher" aria-label="Properties palette"><svg><use href="#launch"/></svg></button></div>
            </section>

            <section class="panel groups">
                <div class="panel-body">
                    <button class="big"><svg class="icon40"><use href="#group"/></svg><span>Group</span></button>
                    <div class="stack">
                        <button class="tool" aria-label="Ungroup"><svg class="icon"><use href="#ungroup"/></svg></button>
                        <button class="tool" aria-label="Group edit"><svg class="icon"><use href="#groupedit"/></svg></button>
                        <button class="tool pressed" aria-label="Group selection"><svg class="icon"><use href="#groupsel"/></svg></button>
                    </div>
                </div>
                <div class="panel-title"><button class="panel-name">Groups<svg class="arrow-lg"><use href="#down"/></svg></button></div>
            </section>

            <section class="panel utilities">
                <div class="panel-body">
                    <button class="big"><svg class="icon40"><use href="#ruler"/></svg><span>Measure</span><svg class="arrow"><use href="#down"/></svg></button>
                    <div class="stack">
                        <button class="tool" aria-label="Quick select"><svg class="icon"><use href="#qselect"/></svg></button>
                        <button class="tool" aria-label="Select all"><svg class="icon"><use href="#selall"/></svg></button>
                        <button class="tool" aria-label="Calculator"><svg class="icon"><use href="#calc"/></svg></button>
                    </div>
                </div>
                <div class="panel-title"><button class="panel-name">Utilities<svg class="arrow-lg"><use href="#down"/></svg></button></div>
            </section>

            <section class="panel clipboard">
                <div class="panel-body">
                    <button class="big"><svg class="icon40"><use href="#paste"/></svg><span>Paste</span><svg class="arrow"><use href="#down"/></svg></button>
                    <div class="stack">
                        <button class="tool" aria-label="Cut"><svg class="icon"><use href="#cut"/></svg><svg class="arrow"><use href="#down"/></svg></button>
                        <button class="tool" aria-label="Copy clip"><svg class="icon"><use href="#copyclip"/></svg><svg class="arrow"><use href="#down"/></svg></button>
                    </div>
                </div>
                <div class="panel-title"><button class="panel-name">Clipboard</button></div>
            </section>

            <section class="panel view">
                <div class="panel-body">
                    <button class="big"><svg class="icon40"><use href="#base"/></svg><span>Base</span><svg class="arrow"><use href="#down"/></svg></button>
                </div>
                <div class="panel-title"><button class="panel-name">View<svg class="arrow-lg"><use href="#down"/></svg></button><button class="launcher" aria-label="View settings"><svg><use href="#launch"/></svg></button></div>
            </section>
        </div>

        <nav class="doc-tabs file-tabs">
            <span class="slash"></span>
            <button class="doc-tab">Start</button>
            <button class="doc-tab current">solidos<svg class="tab-x"><use href="#closebold"/></svg></button>
            <button class="add" aria-label="New drawing"><svg class="icon16"><use href="#plus"/></svg></button>
            <span class="slash"></span>
        </nav>

        <main class="canvas">
            <div class="vp-label"><button>[&#8211;]</button><button>[OLE1]</button><button>[X-Ray]</button></div>
            <div class="vp-controls">
                <button aria-label="Minimize drawing"><svg class="icon16"><use href="#minbold"/></svg></button>
                <button aria-label="Restore drawing"><svg class="icon16"><use href="#restore"/></svg></button>
                <button aria-label="Close drawing"><svg class="icon16"><use href="#closebold"/></svg></button>
            </div>

            <!-- dodecahedron, x-ray style -->
            <svg class="solid" viewBox="0 0 1320 1350">
                <g shape-rendering="crispEdges">
                    <path fill="#797d7d" d="M315 185L713 68L748 245L425 443L384 440z"/>
                    <path fill="#6c7070" d="M713 68L1027 250L910 381L748 245z"/>
                    <path fill="#868a8a" d="M748 245L910 381L826 480L384 440L374 470z"/>
                    <path fill="#7f8383" d="M315 185L384 440L374 470L105 433z"/>
                    <path fill="#838787" d="M105 433L374 470L220 845L48 842z"/>
                    <path fill="#5c5c5e" d="M1027 250L1258 538L1086 535L910 381z"/>
                    <path fill="#707474" d="M910 381L1086 535L930 910L826 480z"/>
                    <path fill="#737777" d="M1086 535L1258 538L1200 946L930 910z"/>
                    <path fill="#767a7a" d="M930 910L1200 946L991 1195L922 940z"/>
                    <path fill="#6c7070" d="M930 910L922 940L991 1195L593 1312L557 1135z"/>
                    <path fill="#878b8b" d="M384 440L826 480L930 910L922 940L480 900L374 470z"/>
                    <path fill="#7c8080" d="M374 470L480 900L394 995L220 845z"/>
                    <path fill="#848888" d="M480 900L890 937L557 1135L394 995z"/>
                    <path fill="#4f4f50" d="M48 842L220 845L394 995L275 1122z"/>
                    <path fill="#5a5a5b" d="M394 995L557 1135L593 1312L275 1132z"/>
                    <path fill="none" stroke="#d2d4d4" stroke-width="3" d="M713 68L748 245L374 470L105 433M374 470L480 900L922 940"/>
                    <path fill="none" stroke="#b4b6b6" stroke-width="3" d="M748 245L1086 535L1258 538M1086 535L922 940L991 1195M480 900L275 1130"/>
                    <path fill="none" stroke="#fff" stroke-width="3" d="M315 185L713 68L1027 250L1258 538L1200 946L991 1195L593 1312L275 1130L48 842L105 433zL384 440L826 480L1027 250M826 480L930 910L1200 946M930 910L557 1135L593 1312M557 1135L220 845L48 842M220 845L384 440"/>
                </g>
                <!-- UCS -->
                <g fill="none">
                    <path stroke="#2f7a2f" stroke-width="20" d="M286 1126L406 1056"/>
                    <path stroke="#4f9a4f" stroke-width="8" d="M286 1128L408 1058"/>
                    <path stroke="#c65555" stroke-width="20" d="M276 1132L405 1205"/>
                    <path stroke="#f08080" stroke-width="9" d="M276 1132L405 1203"/>
                    <path stroke="#2f5188" stroke-width="20" d="M278 1136V988"/>
                    <path stroke="#4169a5" stroke-width="8" d="M280 1136V988"/>
                    <path fill="#9cc4ff" d="M268 988l10-12 10 12z"/>
                </g>
                <g class="ucs-text">
                    <text x="276" y="968" fill="#1166ee">Z</text>
                    <text x="400" y="1036" fill="#12b012">Y</text>
                    <text x="402" y="1188" fill="#e22">X</text>
                </g>
            </svg>

            <svg class="cursor" viewBox="0 0 120 120" shape-rendering="crispEdges">
                <path d="M43.500 18v87" stroke="#8080ff"/>
                <path d="M19 89.500L94 47" stroke="#80ff80"/>
                <path d="M19 62L94 104.500" stroke="#ff8080"/>
                <path d="M40.500 72.500h6v6h-6z" fill="#212830" stroke="#fff"/>
            </svg>

            <svg class="viewcube" viewBox="0 0 140 130">
                <ellipse cx="70" cy="74" rx="57" ry="34" fill="none" stroke="#454c55" stroke-width="13"/>
                <g class="compass">
                    <text x="30" y="50" transform="rotate(25 30 44)">W</text>
                    <text x="109" y="50" transform="rotate(25 109 44)">N</text>
                    <text x="24" y="104" transform="rotate(-30 24 98)" class="near">S</text>
                    <text x="116" y="103" transform="rotate(30 116 97)" class="near">E</text>
                </g>
                <path d="M70 8l36 18-36 20-36-20z" fill="#b9b9b9"/>
                <path d="M34 26l36 20v41L37 65z" fill="#a8a8a8"/>
                <path d="M106 26L70 46v41l33-22z" fill="#9b9b9b"/>
                <path d="M34 26l36 20 36-20M70 46v41M34 26L70 8l36 18" fill="none" stroke="#555" stroke-dasharray="2 1"/>
                <path d="M70 37l7 4v8l-7 4-7-4v-8z" fill="#9097a6" fill-opacity=".5"/>
                <g class="cube-text">
                    <text transform="translate(69 29) rotate(25)">TOP</text>
                    <text transform="translate(53 61) skewY(28)">FRONT</text>
                    <text transform="translate(88 61) skewY(-28)">RIGHT</text>
                </g>
            </svg>
            <button class="wcs">WCS<svg viewBox="0 0 10 6"><path d="M0 0h10L5 5z" fill="#8a8d9a" stroke="#c8c8d2"/></svg></button>

            <div class="navbar">
                <svg viewBox="0 0 40 260">
                    <g fill="none" stroke="#454b55" stroke-width="1.500">
                        <circle cx="33" cy="7" r="4" fill="#454b55"/><path d="M31 5l4 4M35 5l-4 4" stroke="#777c80"/>
                        <path d="M20 22h13v13a13 13 0 1 1-13-13z" fill="#5d626c"/><circle cx="20" cy="35" r="7" fill="#575c66"/><path d="M14 40l-4 5M26 40l4 5"/>
                        <path d="M4 69h33M4 203h33" stroke="#6f7476" stroke-width="1"/>
                        <path d="M14 101l-7-9c-2-4 0-5 3-3l4 4-3-13c0-3 3-3 4 0l3 9V77c0-4 4-4 4 0v12l3-11c1-3 4-3 4 0l-2 12 3-6c2-2 4-1 3 2l-5 15z" fill="#5d626c"/>
                        <path d="M6 110l16 17M24 110L6 127M6 114v-4h4M21 110h4v4M6 124v4h4"/><circle cx="26" cy="127" r="6" fill="#5d626c"/><path d="M30 132l5 5" stroke-width="3"/>
                        <ellipse cx="20" cy="171" rx="13" ry="5"/><path d="M20 156l5 7h-3v19h-5v-19h-3z" fill="#5d626c"/><path d="M15 170v8l-6-4z" fill="#454b55"/>
                        <path d="M6 208h7v8H6zM16 208h7v8h-7zM26 208h7v8h-7zM6 219h19v17H6z" fill="#5d626c"/><path d="M12 223v9l7-4z" fill="#454b55"/>
                        <circle cx="33" cy="253" r="4"/><path d="M31 253h4"/>
                    </g>
                    <path d="M18 60h6l-3 3zM18 147h6l-3 3zM18 194h6l-3 3z" fill="#2f353d"/>
                </svg>
            </div>

            <div class="command">
                <ol class="history">
                    <li class="old">Command:</li>
                    <li class="mid">Command:</li>
                    <li>Command: _qsave</li>
                </ol>
                <div class="cmdline">
                    <div class="cmdtools">
                        <span class="grip"></span>
                        <button aria-label="Close"><svg class="cmd-x"><use href="#close"/></svg></button>
                        <button aria-label="Customize"><svg class="icon" viewBox="0 0 20 20"><path d="M2 18L12 8" stroke="#c4c6ca" stroke-width="3.500" stroke-linecap="round"/><path d="M19 5a5 5 0 1 1-5-4l-2 4 3 3z" fill="#c4c6ca"/></svg></button>
                    </div>
                    <label class="cmdinput">
                        <svg class="prompt" viewBox="0 0 20 16"><path d="M.500.500h19v15H.500z" fill="#aeb0b3" stroke="#6a6d72"/><path d="M0 0h20v4H0z" fill="#55585e"/><path d="M2 7l3 2-3 2M7 11.500h5" fill="none" stroke="#55585e"/></svg>
                        <svg class="prompt-arrow" viewBox="0 0 10 6"><path d="M0 0h10L5 6z" fill="#4a4d52"/></svg>
                        <input type="text" placeholder="Type a command" aria-label="Command">
                        <svg class="recent" viewBox="0 0 8 4"><path d="M4 0l4 4H0z" fill="#4a4d52"/></svg>
                    </label>
                </div>
            </div>
        </main>

        <nav class="doc-tabs layout-tabs">
            <button class="doc-tab current">Model</button>
            <button class="doc-tab">A3_1</button>
            <span class="slash"></span>
            <button class="add" aria-label="New layout"><svg class="icon16"><use href="#plus"/></svg></button>
            <span class="slash"></span>
        </nav>

        <footer class="status">
            <div class="status-fill"></div>
            <div class="status-group"><button class="model">MODEL</button></div>
            <div class="status-group">
                <button aria-label="Grid"><svg class="icon"><use href="#s-grid"/></svg></button>
                <button aria-label="Snap"><svg class="icon"><use href="#s-snap"/></svg></button>
                <button aria-label="Snap settings" class="drop"><svg class="arrow-lg"><use href="#down"/></svg></button>
            </div>
            <div class="status-group">
                <button aria-label="Ortho"><svg class="icon"><use href="#s-ortho"/></svg></button>
                <button aria-label="Polar"><svg class="icon"><use href="#s-polar"/></svg></button>
                <button aria-label="Polar settings" class="drop"><svg class="arrow-lg"><use href="#down"/></svg></button>
                <button aria-label="Isodraft"><svg class="icon"><use href="#s-iso"/></svg></button>
                <button aria-label="Isodraft settings" class="drop"><svg class="arrow-lg"><use href="#down"/></svg></button>
                <button aria-label="Object tracking" class="on"><svg class="icon"><use href="#s-track"/></svg></button>
                <button aria-label="Object snap" class="on"><svg class="icon"><use href="#s-osnap"/></svg></button>
                <button aria-label="Object snap settings" class="drop"><svg class="arrow-lg"><use href="#down"/></svg></button>
            </div>
            <div class="status-group">
                <button aria-label="Annotation visibility" class="on"><svg class="icon"><use href="#s-annovis"/></svg></button>
                <button aria-label="Auto scale"><svg class="icon"><use href="#s-annoauto"/></svg></button>
                <button aria-label="Annotation scale"><svg class="icon"><use href="#s-anno"/></svg></button>
                <button class="scale">1:1<svg class="arrow-lg"><use href="#down"/></svg></button>
            </div>
            <div class="status-group">
                <button aria-label="Workspace"><svg class="icon"><use href="#s-gear"/></svg></button>
                <button aria-label="Workspace list" class="drop"><svg class="arrow-lg"><use href="#down"/></svg></button>
            </div>
            <div class="status-group"><button aria-label="Annotation monitor"><svg class="icon"><use href="#plus"/></svg></button></div>
            <div class="status-group"><button aria-label="Isolate objects"><svg class="icon"><use href="#s-isolate"/></svg></button></div>
            <div class="status-group"><button aria-label="Graphics performance" class="tray"><svg><use href="#s-tray"/></svg></button></div>
            <div class="status-group">
                <button aria-label="Clean screen"><svg class="icon"><use href="#s-clean"/></svg></button>
                <button aria-label="Customization"><svg class="icon"><use href="#s-menu"/></svg></button>
            </div>
        </footer>
    </div>
</body>
</html>
```

FILE: styles.css
```
* {
    box-sizing: border-box;
}

body {
    margin: 0;
    background-color: #222933;
    color: #f2f2f2;
    font-family: "Open Sans", "Noto Sans", sans-serif;
    font-size: 14px;
    line-height: 20px;
}

button {
    display: flex;
    align-items: center;
    padding: 0;
    border: none;
    background: none;
    color: inherit;
    font: inherit;
    white-space: nowrap;
}

svg {
    display: block;
    flex: none;
}

.sprite {
    position: absolute;
    width: 0;
    height: 0;
}

.window {
    display: flex;
    flex-direction: column;
    height: 100vh;
    border: 1px solid #0696d7;
    overflow: hidden;
}

.icon {
    width: 20px;
    height: 20px;
}

.icon16 {
    width: 16px;
    height: 16px;
}

.icon40 {
    width: 40px;
    height: 40px;
}

.arrow {
    width: 6px;
    height: 4px;
}

.arrow-lg {
    width: 10px;
    height: 5px;
}

/* title bar */
.titlebar {
    display: flex;
    align-items: center;
    justify-content: space-between;
    height: 34px;
    padding: 0 10px 0 3px;
}

.quick {
    display: flex;
    align-items: center;
    gap: 10px;
}

.quick .arrow {
    width: 5px;
}

.dim {
    opacity: 0.5;
}

.logo {
    margin-right: 1px;
    color: #fff;
    font-weight: 700;
}

.logo-a {
    width: 25px;
    height: 23px;
    background-color: #e51050;
    border-left: 5px solid #f4587f;
    font-size: 16px;
    line-height: 22px;
}

.logo-cad {
    width: 25px;
    height: 16px;
    background-color: #7a0c2c;
    font-size: 9px;
    line-height: 16px;
}

.icon-more {
    width: 10px;
    height: 10px;
}

.share {
    gap: 6px;
    color: #8accff;
}

.caption {
    display: flex;
    gap: 17px;
    margin-left: auto;
}

.infocenter {
    display: flex;
    align-items: center;
    margin-left: auto;
}

.expand svg {
    width: 5px;
    height: 9px;
    margin-right: 9px;
}

.search {
    width: 223px;
    height: 26px;
    margin-right: 5px;
    padding: 0 4px;
    border: none;
    background-color: #474f61;
    color: #fff;
    font: italic 13px "Open Sans", sans-serif;
}

.search::placeholder {
    color: #b5b9c1;
    opacity: 1;
}

.account {
    gap: 8px;
    margin-left: 9px;
}

.account .arrow {
    margin-left: -5px;
}

.store {
    margin-left: 12px;
}

.apps {
    gap: 7px;
    margin: 0 14px 0 9px;
}

.help {
    gap: 10px;
    padding-left: 10px;
    border-left: 1px solid #4d5666;
}

.help-mark {
    width: 20px;
    height: 20px;
    border-radius: 50%;
    background-color: #d9d9d9;
    color: #444;
    font-weight: 600;
}

.winctl {
    display: flex;
    gap: 15px;
    margin-left: 86px;
}

/* ribbon tabs */
.tabs {
    display: flex;
    gap: 1px;
    height: 29px;
    padding: 4px 7px 0;
}

.tab {
    padding: 0 12px;
    color: #b4b8bf;
}

.tab.active {
    background-color: #3b4453;
    color: #f5f5f5;
}

.collapse {
    gap: 5px;
    margin-left: 25px;
}

.collapse-box {
    width: 20px;
    height: 10px;
    background-color: #f5f5f5;
    color: #444;
    font-size: 6px;
    line-height: 10px;
}

/* ribbon */
.ribbon {
    display: flex;
    height: 124px;
    margin: 0 4px;
    background-color: #3b4453;
}

.panel {
    display: flex;
    flex-direction: column;
    flex: none;
    padding-top: 5px;
    border-right: 1px solid #222933;
}

.panel.view {
    border-right: none;
}

.draw { width: 278px; }
.modify { width: 316px; }
.annotation { width: 184px; }
.layers { width: 341px; }
.block { width: 100px; }
.properties { width: 277px; }
.groups { width: 85px; }
.utilities { width: 121px; }
.clipboard { width: 113px; }
.view { width: 78px; }

.panel-body {
    display: grid;
    height: 93px;
}

.draw .panel-body {
    grid-template-columns: 46px 59px 64px 51px 1fr;
    padding-left: 4px;
}

.modify .panel-body {
    grid-template-columns: 91px 88px 95px 1fr;
    padding-left: 7px;
}

.annotation .panel-body { grid-template-columns: 58px 76px 1fr; }
.layers .panel-body { grid-template-columns: 77px 1fr; }
.block .panel-body { grid-template-columns: 51px 1fr; }
.properties .panel-body { grid-template-columns: 75px 27px 1fr; }
.groups .panel-body { grid-template-columns: 51px 1fr; }
.utilities .panel-body { grid-template-columns: 87px 1fr; }
.clipboard .panel-body { grid-template-columns: 65px 1fr; }

.panel-title {
    display: flex;
    flex: 1;
    padding-top: 3px;
}

.panel-name {
    flex: 1;
    justify-content: center;
    gap: 7px;
}

.launcher {
    justify-content: center;
    width: 18px;
}

.launcher svg {
    width: 8px;
    height: 8px;
}

.big {
    flex-direction: column;
    padding-top: 2px;
}

.big span {
    margin-top: 6px;
}

.big .arrow {
    margin-top: 4px;
}

.big .glyph-a {
    height: 40px;
    margin-top: 0;
    color: #d9d9d9;
    font-family: "Liberation Sans", Arial, sans-serif;
    font-size: 49px;
    line-height: 42px;
}

.stack {
    padding-left: 4px;
}

.tool {
    gap: 7px;
    height: 31px;
}

.stack .tool {
    gap: 10px;
}

.split .arrow {
    margin: 0 18px 0 auto;
}

.pressed {
    justify-content: center;
    width: 29px;
    height: 28px;
    margin-left: -4px;
    border: 1px solid #6cb8f6;
    background-color: #465d78;
}

.layer-tools {
    padding-right: 3px;
}

.icon-row {
    display: flex;
    gap: 10px;
    padding-left: 4px;
}

.combos {
    padding-right: 3px;
}

.combo {
    position: relative;
    display: flex;
    align-items: center;
    height: 28px;
    margin: 1px 0 3px;
    padding-left: 8px;
    border: 1px solid #272e39;
    background-color: #4d5a6d;
}

.combo + .combo {
    margin-top: 3px;
}

.combo select {
    flex: 1;
    min-width: 0;
    height: 24px;
    padding: 0 0 0 5px;
    border: none;
    appearance: none;
    background: none;
    color: #f2f2f2;
    font: inherit;
}

.combo .arrow-lg {
    position: absolute;
    top: 11px;
    right: 2px;
    pointer-events: none;
}

.layers .combo {
    padding-left: 3px;
}

.layers .combo .icon + .icon {
    margin-left: 4px;
}

.layers .swatch {
    margin-left: 7px;
}

.swatch {
    width: 18px;
    height: 18px;
    background-color: #fff;
    border: 1px solid #e0e0e0;
}

.swatch-lg {
    width: 20px;
    height: 20px;
}

.sample {
    width: 80px;
    height: 1px;
    background-color: #fff;
}

.sample + select {
    padding-left: 3px;
}

/* drawing and layout tabs */
.doc-tabs {
    display: flex;
    flex: none;
    align-items: center;
    margin: 0 4px;
}

.file-tabs {
    height: 38px;
    padding: 3px 0 0 11px;
    border-bottom: 5px solid #3b4453;
}

.layout-tabs {
    height: 35px;
    padding: 0 0 0 10px;
    border-top: 5px solid #3b4453;
}

.slash {
    width: 9px;
    height: 20px;
    background: linear-gradient(114deg, transparent 47%, #5a6270 47%, #5a6270 53%, transparent 53%);
}

.doc-tab {
    height: 30px;
    padding: 0 10px;
}

.doc-tab.current {
    gap: 9px;
    padding: 0 14px 0 20px;
    background-color: #3b4453;
    clip-path: polygon(11px 0, 100% 0, calc(100% - 11px) 100%, 0 100%);
    font-weight: 700;
}

.layout-tabs .current {
    padding-right: 20px;
}

.tab-x {
    width: 14px;
    height: 14px;
    opacity: 0.6;
}

.add {
    margin: 0 13px 0 11px;
}

/* drawing area */
.canvas {
    position: relative;
    display: flex;
    flex: 1;
    flex-direction: column;
    align-items: center;
    justify-content: flex-end;
    background-color: #212830;
}

.vp-label {
    position: absolute;
    top: 5px;
    left: 7px;
    display: flex;
    gap: 1px;
}

.vp-label button:first-child {
    font-family: "DejaVu Sans Mono", monospace;
    font-size: 12px;
}

.vp-controls {
    position: absolute;
    top: 8px;
    right: 13px;
    display: flex;
    gap: 9px;
}

.solid {
    position: absolute;
    top: 84px;
    left: calc(50% - 218px);
    width: 440px;
    height: 450px;
}

.ucs-text {
    font-size: 62px;
    font-weight: 300;
}

.cursor {
    position: absolute;
    top: 154px;
    left: calc(50% + 422px);
    width: 120px;
    height: 120px;
}

.viewcube {
    position: absolute;
    top: 64px;
    right: 15px;
    width: 140px;
    height: 130px;
}

.compass {
    fill: #a9abae;
    font-family: "Liberation Sans", Arial, sans-serif;
    font-size: 14px;
    font-weight: 700;
    text-anchor: middle;
}

.compass .near {
    font-size: 19px;
}

.cube-text {
    fill: #41464d;
    font-family: "Liberation Sans", Arial, sans-serif;
    font-size: 9px;
    font-weight: 700;
    text-anchor: middle;
}

.wcs {
    position: absolute;
    top: 199px;
    right: 58px;
    gap: 7px;
    width: 56px;
    height: 20px;
    padding: 0 5px;
    border-radius: 4px;
    background-color: #9b9dac;
    color: #666975;
    font-family: "Liberation Sans", Arial, sans-serif;
    font-size: 13px;
}

.wcs svg {
    width: 10px;
    height: 6px;
}

.navbar {
    position: absolute;
    top: 250px;
    right: 6px;
    width: 41px;
    height: 260px;
    border: 1px solid #6c7174;
    border-radius: 3px;
    background-color: #5a5f62;
}

.navbar svg {
    width: 40px;
    height: 260px;
}

/* command line */
.command {
    position: relative;
    width: min(1096px, 90%);
    font-family: "DejaVu Sans Mono", monospace;
    font-size: 15px;
}

.history {
    display: flex;
    flex-direction: column;
    align-items: flex-start;
    gap: 6px;
    margin: 0 0 4px 78px;
    padding: 0;
    list-style: none;
}

.history li {
    height: 19px;
    padding: 0 2px;
    border-radius: 2px;
    background-color: #5c5e5f;
    color: #fff;
    line-height: 19px;
}

.history .mid {
    background-color: #535758;
    color: #cfcfcf;
}

.history .old {
    background-color: #4d5153;
    color: #a9abac;
}

.cmdline {
    display: flex;
    height: 34px;
}

.cmdtools {
    display: flex;
    align-items: center;
    width: 71px;
    padding-left: 4px;
    background-color: #2a2f3b;
}

.grip {
    width: 7px;
    height: 22px;
    margin-right: 6px;
    background-image: radial-gradient(circle at 1px 1px, #c4c6ca 1px, transparent 1px);
    background-size: 4px 4px;
}

.cmd-x {
    width: 14px;
    height: 14px;
    margin-right: 15px;
    opacity: 0.8;
}

.cmdinput {
    display: flex;
    flex: 1;
    align-items: center;
    margin: 1px 0;
    padding: 0 7px 0 5px;
    border-radius: 3px;
    background-color: #bfc0c2;
}

.prompt {
    width: 20px;
    height: 16px;
}

.prompt-arrow {
    width: 9px;
    height: 5px;
    margin: 0 8px 0 3px;
}

.cmdinput input {
    flex: 1;
    min-width: 0;
    padding: 0;
    border: none;
    outline: none;
    background: none;
    font: italic 15px "DejaVu Sans Mono", monospace;
}

.cmdinput input::placeholder {
    color: #6b6d70;
    opacity: 1;
}

.recent {
    width: 8px;
    height: 4px;
}

/* status bar */
.status {
    display: flex;
    flex: none;
    gap: 3px;
    height: 30px;
    margin: 7px 5px 6px;
}

.status-fill {
    flex: 1;
    margin-right: 2px;
    background-color: #3b4453;
}

.status-group {
    display: flex;
    background-color: #3b4453;
}

.status-group button {
    justify-content: center;
    width: 30px;
}

.status-group .drop {
    width: 20px;
}

.status-group .model {
    width: 59px;
}

.status-group .scale {
    gap: 5px;
    width: 39px;
}

.status-group .on {
    width: 29px;
    margin: 1px 1px 1px 0;
    background-color: #5f8fc4;
}

.status-group .tray {
    width: 34px;
}

.tray svg {
    width: 26px;
    height: 26px;
}
```
